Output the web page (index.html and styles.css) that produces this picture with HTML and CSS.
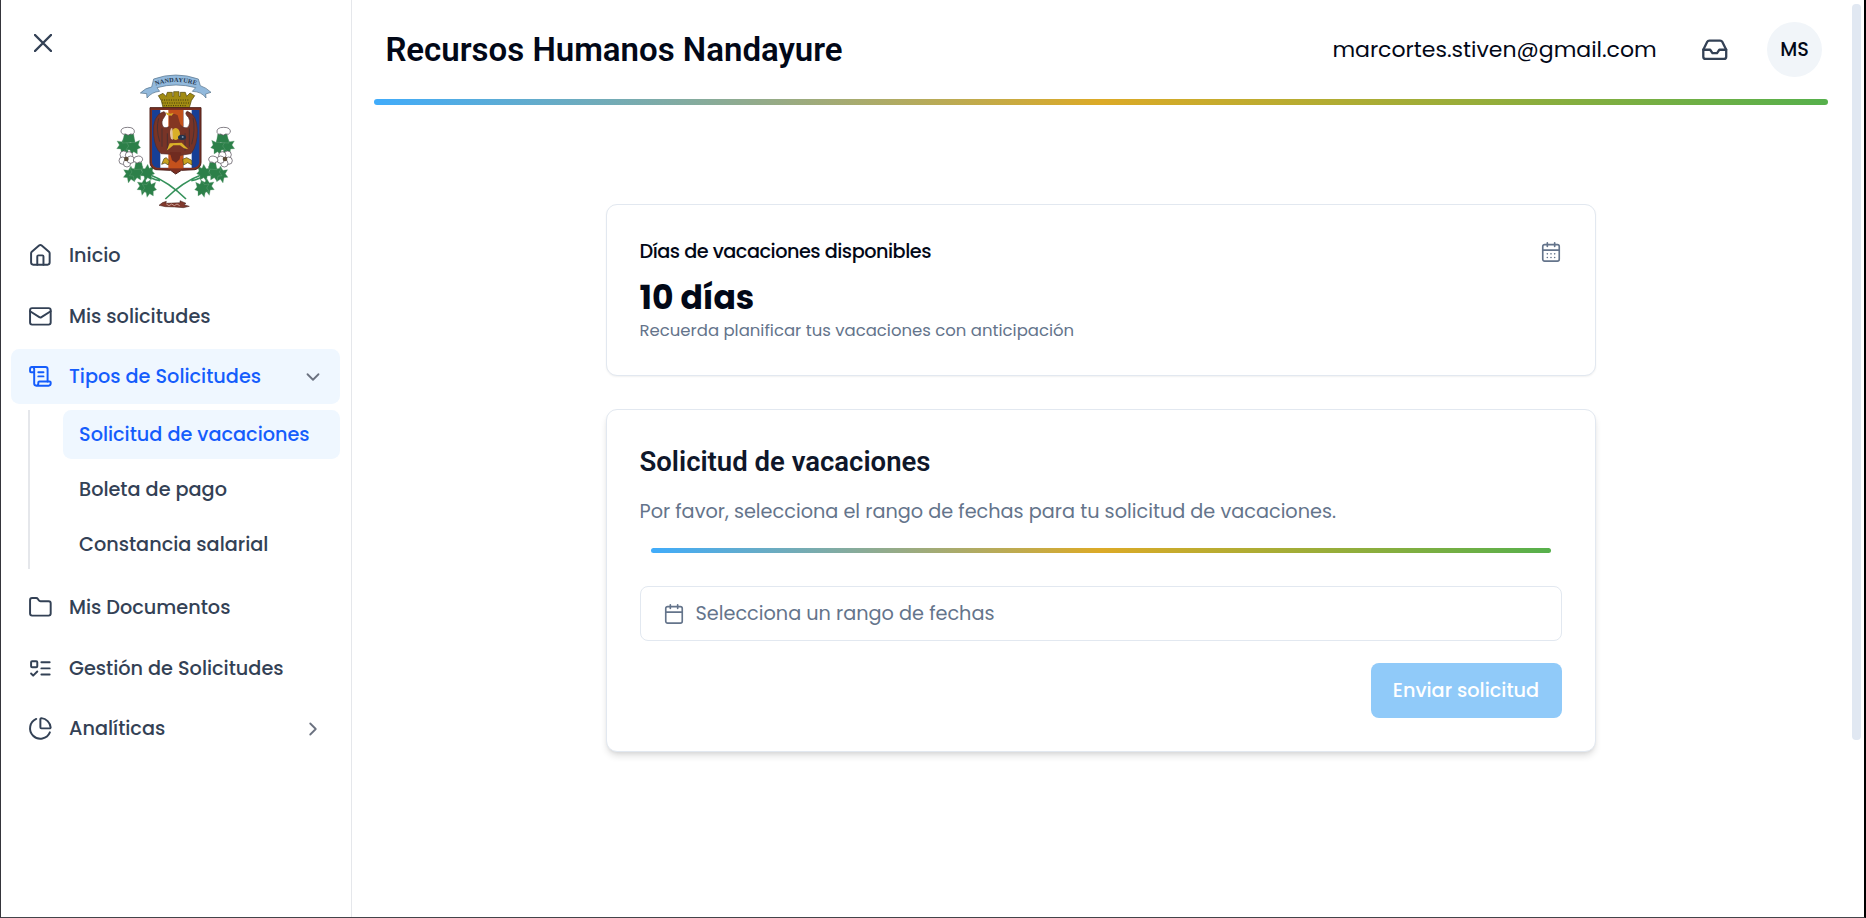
FILE: index.html
```html
<!DOCTYPE html>
<html lang="es">
<head>
<meta charset="utf-8">
<title>Recursos Humanos Nandayure</title>
<link rel="stylesheet" href="styles.css">
</head>
<body>
<div class="app">
  <aside class="sidebar">
    <button class="close" aria-label="Cerrar"><svg viewBox="0 0 18 18"><path d="M1 1l16 16M17 1L1 17"/></svg></button>
    <svg class="crest" viewBox="0 0 420 450">
      <defs>
        <path id="arc" d="M152 62Q212 40 278 62"/>
        <g id="leaf"><path d="M0-22l5 12 13-6-4 14 7 8-10 5 0 14-11-7-8 11-3-16-12-1 8-11-7-12 14 2z"/></g>
        <g id="branch">
          <path class="stem" d="M136 330Q190 350 243 402M110 318Q140 345 165 347"/>
          <g class="leaf">
            <use href="#leaf" x="58" y="239"/><use href="#leaf" x="86" y="242"/>
            <use href="#leaf" x="78" y="325"/><use href="#leaf" x="96" y="320"/>
            <use href="#leaf" x="128" y="320"/><use href="#leaf" x="119" y="362"/><use href="#leaf" x="134" y="368"/>
            <path d="M58 206l28 1 4 25-38 2zM92 292l18 0 4 20-26 2z"/>
          </g>
          <path class="petal" d="M48 202q-2-15 20-15t20 15q-4 9-11 5-8 7-15 0-9 4-14-5z"/>
          <g class="petal"><circle cx="56" cy="269" r="11"/><circle cx="72" cy="271" r="11"/><circle cx="53" cy="287" r="11"/><circle cx="66" cy="295" r="11"/><circle cx="77" cy="284" r="11"/></g>
          <circle cx="64" cy="282" r="7" class="core"/>
          <path class="petal" d="M85 285q2-12 15-12t13 12q-5 10-10 6-8 7-12 0-5 2-6-6z"/>
        </g>
      </defs>
      <use href="#branch"/>
      <use href="#branch" transform="translate(424 0) scale(-1 1)"/>
      <path class="ribbon" d="M146 42Q212 18 280 42L286 62Q304 68 318 82L302 87 303 99Q290 80 262 79L272 68Q212 52 156 68L164 79Q140 81 126 99L125 86 106 84Q122 68 140 66Z"/>
      <text class="motto"><textPath href="#arc" textLength="124">NANDAYURE</textPath></text>
      <path class="crown" d="M160 92l14-7 9 9 4-12h15v12h4V80h16v14h4V82h15l4 12 10-10 14 8-10 15-6 21H174l-5-21z"/>
      <path class="crown-band" d="M172 114h80M170 105h84M176 122h70" stroke-dasharray="3 4"/>
      <path class="shield" d="M135 128H288V293Q287 309 270 314L229 316 212 327 197 316 152 314Q136 308 135 293Z"/>
      <path fill="#173f96" d="M141 135H283V292Q281 307 266 308H156Q142 305 141 291Z"/>
      <path fill="#fff" d="M166 135h28v173h-28zM235 135h25v173h-25z"/>
      <path fill="#c4511c" d="M190 135h45v175h-45z"/>
      <path class="wing" d="M176 140Q141 150 146 210 149 250 168 266L200 268 212 289 226 271 258 266Q278 240 277 195 276 149 247 139 236 144 251 158 259 175 247 188 234 191 226 180L198 181Q183 193 174 185 166 170 178 156 187 143 176 140Z"/>
      <path class="feather" d="M161 160Q152 190 164 230M171 190v55M264 158Q272 194 260 238M253 190v55M187 205v52M240 205v52"/>
      <path fill="#843622" d="M192 153q12-13 26-2l10 34-8 10-27-2z"/>
      <path fill="#d6aa25" d="M182 142l14 4 10-2-6 8-14-2z"/>
      <ellipse cx="212" cy="207" rx="13" ry="18" fill="#d9af28"/>
      <path fill="#e3c3a0" d="M198 190q-6 14 0 32l6 2-2-34z"/>
      <path fill="#d9af28" d="M194 235l36-2 20 20-13-3-12-9-20 0-20 16z"/>
      <ellipse cx="231" cy="217" rx="12" ry="8" fill="#26324a"/><circle cx="233" cy="216" r="3" fill="#7d92ab"/>
      <path fill="#c9a21f" stroke="#463b12" stroke-width="2" d="M170 298l7-17 7-3 9 10-3 12-10-6zM233 283l12-5 15 8 1 14-13-7-12 7z"/>
      <path fill="#702b20" d="M194 261l34 1-4 21-11 10-12-7z"/>
      <path fill="#81392d" stroke="#3d1f1b" stroke-width="1.5" d="M162 421q10-10 22-12l-1 6 42-2v-6l18 8-6 4 16 5-18 4-26-2-28-1z"/>
      <path stroke="#e8cbc2" stroke-width="2" d="M184 417l8 5 8-5 8 5 8-5 8 5" fill="none"/>
    </svg>
    <nav class="nav">
      <a class="item"><svg class="ico" viewBox="0 0 24 24"><path d="M15 21v-8a1 1 0 0 0-1-1h-4a1 1 0 0 0-1 1v8"/><path d="M3 10a2 2 0 0 1 .709-1.528l7-5.999a2 2 0 0 1 2.582 0l7 5.999A2 2 0 0 1 21 10v9a2 2 0 0 1-2 2H5a2 2 0 0 1-2-2z"/></svg><span class="label">Inicio</span></a>
      <a class="item"><svg class="ico" viewBox="0 0 24 24"><rect width="20" height="16" x="2" y="4" rx="2"/><path d="m22 7-8.97 5.7a1.94 1.94 0 0 1-2.06 0L2 7"/></svg><span class="label">Mis solicitudes</span></a>
      <a class="item active"><svg class="ico" viewBox="0 0 24 24"><path d="M15 12h-5M15 8h-5M19 17V5a2 2 0 0 0-2-2H4"/><path d="M8 21h12a2 2 0 0 0 2-2v-1a1 1 0 0 0-1-1H11a1 1 0 0 0-1 1v1a2 2 0 1 1-4 0V5a2 2 0 1 0-4 0v2a1 1 0 0 0 1 1h3"/></svg><span class="label">Tipos de Solicitudes</span><svg class="chev" viewBox="0 0 24 24"><path d="m6 9 6 6 6-6"/></svg></a>
      <div class="sub">
        <a class="subitem active">Solicitud de vacaciones</a>
        <a class="subitem">Boleta de pago</a>
        <a class="subitem">Constancia salarial</a>
      </div>
      <a class="item"><svg class="ico" viewBox="0 0 24 24"><path d="M20 20a2 2 0 0 0 2-2V8a2 2 0 0 0-2-2h-7.9a2 2 0 0 1-1.69-.9L9.6 3.9A2 2 0 0 0 7.93 3H4a2 2 0 0 0-2 2v13a2 2 0 0 0 2 2Z"/></svg><span class="label">Mis Documentos</span></a>
      <a class="item"><svg class="ico" viewBox="0 0 24 24"><rect x="3" y="5" width="6" height="6" rx="1"/><path d="m3 17 2 2 4-4M13 6h8M13 12h8M13 18h8"/></svg><span class="label">Gestión de Solicitudes</span></a>
      <a class="item"><svg class="ico" viewBox="0 0 24 24"><path d="M21 12c.552 0 1.005-.449.95-.998a10 10 0 0 0-8.953-8.951c-.55-.055-.998.398-.998.95v8a1 1 0 0 0 1 1z"/><path d="M21.21 15.89A10 10 0 1 1 8 2.83"/></svg><span class="label">Analíticas</span><svg class="chev" viewBox="0 0 24 24"><path d="m9 18 6-6-6-6"/></svg></a>
    </nav>
  </aside>
  <main class="main">
    <header class="header">
      <h1 class="title">Recursos Humanos Nandayure</h1>
      <span class="email">marcortes.stiven@gmail.com</span>
      <svg class="inbox" viewBox="0 0 24 24"><path d="M22 12h-6l-2 3h-4l-2-3H2"/><path d="M5.45 5.11 2 12v6a2 2 0 0 0 2 2h16a2 2 0 0 0 2-2v-6l-3.45-6.89A2 2 0 0 0 16.76 4H7.24a2 2 0 0 0-1.79 1.11z"/></svg>
      <span class="avatar">MS</span>
    </header>
    <div class="rule"></div>
    <section class="card balance">
      <div class="balance-head"><h2 class="balance-title">Días de vacaciones disponibles</h2>
        <svg class="cal" viewBox="0 0 24 24"><path d="M8 2v4M16 2v4M3 10h18M8 14h.01M12 14h.01M16 14h.01M8 18h.01M12 18h.01M16 18h.01"/><rect width="18" height="18" x="3" y="4" rx="2"/></svg></div>
      <div class="days">10 días</div>
      <div class="hint">Recuerda planificar tus vacaciones con anticipación</div>
    </section>
    <section class="card request">
      <h2 class="request-title">Solicitud de vacaciones</h2>
      <p class="lead">Por favor, selecciona el rango de fechas para tu solicitud de vacaciones.</p>
      <div class="rule small"></div>
      <div class="picker"><svg class="cal" viewBox="0 0 24 24"><path d="M8 2v4M16 2v4M3 10h18"/><rect width="18" height="18" x="3" y="4" rx="2"/></svg><span>Selecciona un rango de fechas</span></div>
      <button class="send">Enviar solicitud</button>
    </section>
  </main>
  <div class="track"><div class="thumb"></div></div>
</div>
</body>
</html>
```
FILE: styles.css
```css
* { box-sizing: border-box; }
body { margin: 0; background: #fff; font-family: Poppins, Inter, "Liberation Sans", sans-serif; font-size: 19.25px; color: #020817; }
h1, h2, p { margin: 0; }
svg { fill: none; flex: none; }
button { border: 0; padding: 0; font: inherit; background: none; }
.app { display: flex; width: 1866px; height: 918px; overflow: hidden; border-left: 1px solid #35353b; border-right: 2px solid #000; border-bottom: 1px solid #44444a; }
.sidebar { width: 351px; flex: none; border-right: 1px solid #e5e7eb; display: flex; flex-direction: column; }
.close { height: 65px; padding: 34px 0 13px 33px; text-align: left; line-height: 0; }
.close svg { width: 18px; height: 18px; stroke: #334155; stroke-width: 2.4; stroke-linecap: round; }
.crest { width: 140px; height: 150px; margin-left: 104px; }
.leaf { fill: #2c8049; stroke: #79aa88; stroke-width: 1; }
.stem { stroke: #35915a; stroke-width: 5; }
.petal { fill: #fff; stroke: #49434d; stroke-width: 2; }
.core { fill: #5c4c38; }
.ribbon { fill: #92b9dc; stroke: #526e86; stroke-width: 2; }
.motto { font: bold 19px "Liberation Serif", serif; fill: #26384f; }
.crown { fill: #a18b13; stroke: #4d430c; stroke-width: 2; }
.crown-band { stroke: #3e380d; stroke-width: 3; }
.shield { fill: #7c2f21; stroke: #4e201a; stroke-width: 3; }
.wing { fill: #783427; stroke: #512b2b; stroke-width: 2; }
.feather { stroke: #4c3030; stroke-width: 3; }
.nav { display: flex; flex-direction: column; gap: 5.5px; padding: 13px 11px 0 10px; }
.item { height: 55px; display: flex; align-items: center; padding: 0 16px 0 17px; border-radius: 8.25px; color: #334155; font-weight: 500; }
.label { margin-left: 16.25px; }
.ico { width: 24.75px; height: 24.75px; stroke: currentColor; stroke-width: 1.9; stroke-linecap: round; stroke-linejoin: round; }
.chev { width: 22px; height: 22px; margin-left: auto; stroke: #6b7280; stroke-width: 2; stroke-linecap: round; stroke-linejoin: round; }
.sub { display: flex; flex-direction: column; gap: 5.5px; margin: 0 0 5.5px 17px; padding-left: 33px; border-left: 2px solid #e5e7eb; }
.subitem { height: 49.5px; display: flex; align-items: center; padding-left: 16px; border-radius: 8.25px; font-weight: 500; color: #334155; }
.active { background: #eff7ff; color: #155dfc; }
.main { flex: 1; min-width: 0; }
.header { height: 99px; padding: 0 30px 0 33.4px; display: flex; align-items: center; }
.title { font: 600 33px/40px Roboto, sans-serif; margin-right: auto; }
.email { font-size: 22px; }
.inbox { width: 27.5px; height: 27.5px; margin: 0 38.5px 0 44.3px; stroke: #334155; stroke-width: 2; stroke-linecap: round; stroke-linejoin: round; }
.avatar { width: 55px; height: 55px; border-radius: 50%; background: #f1f5f9; display: grid; place-items: center; font-weight: 500; }
.rule { height: 6px; margin: 0 24px 0 22px; border-radius: 3px; background: linear-gradient(90deg, #40acfb, #dcaa27 50%, #56b04c); }
.card { width: 990px; margin-left: 253.5px; border: 1px solid #e2e8f0; border-radius: 11px; padding: 0 33px; background: #fff; }
.balance { height: 172px; margin-top: 99px; box-shadow: 0 1px 2px rgba(0,0,0,.06); display: flex; flex-direction: column; }
.balance-head { display: flex; justify-content: space-between; align-items: center; margin: 34px 0 14px; height: 25px; }
.balance-title { font-size: 19.25px; font-weight: 500; letter-spacing: -.025em; }
.cal { width: 22px; height: 22px; stroke: #64748b; stroke-width: 1.8; stroke-linecap: round; stroke-linejoin: round; }
.days { font-size: 33px; font-weight: 700; line-height: 40px; }
.hint { margin-top: 1px; font-size: 16.5px; line-height: 24px; color: #64748b; }
.request { height: 343px; margin-top: 33px; box-shadow: 0 5px 7px -1px rgba(0,0,0,.12), 0 2px 4px -2px rgba(0,0,0,.1); display: flex; flex-direction: column; }
.request-title { font: 600 27.5px/32px Roboto, sans-serif; margin-top: 36px; color: #0f172a; }
.lead { margin-top: 20px; line-height: 28px; color: #64748b; }
.rule.small { height: 5px; flex: none; margin: 22px 11px 0; }
.picker { margin-top: 33px; height: 55px; border: 1px solid #e2e8f0; border-radius: 8px; display: flex; align-items: center; gap: 11px; padding-left: 22px; color: #64748b; }
.send { margin-top: 22px; align-self: flex-end; width: 191px; height: 55px; border-radius: 8px; background: #90caf9; color: #fff; font-weight: 500; }
.track { width: 12px; flex: none; padding: 4px 3px 0 0; }
.thumb { width: 9px; height: 736px; border-radius: 4px; background: #e1e8f2; }
```
